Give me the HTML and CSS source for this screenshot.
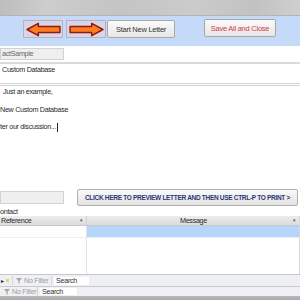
FILE: index.html
```html
<!DOCTYPE html>
<html lang="en">
<head>
  <meta charset="UTF-8" />
  <title>Letter</title>
  <link rel="stylesheet" href="styles.css">
</head>
<body>
  <!-- Window title bar -->
  <div class="titlebar"></div>

  <!-- Toolbar -->
  <div class="toolbar">
    <button class="arrow-btn">
      <svg width="35" height="15" viewBox="0 0 34 14"><polygon points="1,7 12,1 12,4 33,4 33,10 12,10 12,13" fill="#ff7d22" stroke="#8a1c12" stroke-width="1.4" stroke-linejoin="round"/></svg>
    </button>
    <button class="arrow-btn">
      <svg width="35" height="15" viewBox="0 0 34 14"><polygon points="33,7 22,1 22,4 1,4 1,10 22,10 22,13" fill="#ff7d22" stroke="#8a1c12" stroke-width="1.4" stroke-linejoin="round"/></svg>
    </button>
    <button class="btn start-btn">Start New Letter</button>
    <button class="btn save-btn">Save All and Close</button>
  </div>

  <!-- Letter -->
  <div class="letter">
    <div class="name-row">
      <div class="field">actSample</div>
    </div>
    <div class="db-row">Custom Database</div>
    <div class="body-text">
      <p class="indent">Just an example,</p>
      <p>New Custom Database</p>
      <p>ter our discussion...<span class="caret"></span></p>
    </div>
  </div>

  <div class="preview-row">
    <div class="field"></div>
    <button class="preview-btn">CLICK HERE TO PREVIEW LETTER AND THEN USE CTRL-P TO PRINT &gt;</button>
  </div>

  <div class="contact-label">ontact</div>

  <!-- Datasheet -->
  <div class="sheet">
    <div class="head">Reference<span class="drop">▾</span></div>
    <div class="head head-msg">Message<span class="drop">▾</span></div>
    <div class="cell"></div>
    <div class="cell selected"></div>
    <div class="cell filler"></div>
    <div class="cell filler"></div>
  </div>

  <!-- Record navigation -->
  <div class="nav nav-sub">
    <span class="new-rec">▸<span class="star"></span></span>
    <span class="filter">
      <svg width="6" height="6" viewBox="0 0 6 6"><polygon points="0,0 6,0 3.6,3 3.6,6 2.4,5 2.4,3" fill="#a8a8a8"/></svg>
      No Filter
    </span>
    <span class="search">Search</span>
  </div>
  <div class="nav nav-main">
    <span class="filter first">
      <svg width="6" height="6" viewBox="0 0 6 6"><polygon points="0,0 6,0 3.6,3 3.6,6 2.4,5 2.4,3" fill="#a8a8a8"/></svg>
      No Filter
    </span>
    <span class="search">Search</span>
  </div>
  <div class="bottom"></div>
</body>
</html>
```

FILE: styles.css
```css
* {
  margin: 0;
  padding: 0;
  box-sizing: border-box;
}

html, body {
  width: 300px;
  height: 300px;
  overflow: hidden;
  background: #fff;
  font-family: "Liberation Sans", Arial, sans-serif;
  font-size: 7.2px;
  letter-spacing: -0.3px;
  color: #2a2a2a;
}

.titlebar {
  height: 16px;
  background: linear-gradient(to right, #bdbdbd, #cdcdcd 15%, #c4c4c4 40%, #cbcbcb 65%, #c2c2c2 85%, #cfcfcf);
  border-bottom: 1px solid #b4b4b4;
}

.toolbar {
  height: 30px;
  background: #c4daf8;
  display: flex;
  align-items: flex-start;
  padding: 4px 0 0 23px;
}

.arrow-btn {
  width: 40px;
  height: 18px;
  margin-right: 3px;
  background: #d9d4e6;
  border: 1px solid #b4b2c4;
  display: flex;
  align-items: center;
  justify-content: center;
}

.btn {
  height: 18px;
  background: linear-gradient(#fbfbfb, #e6e6e6);
  border: 1px solid #a8a8a8;
  border-radius: 2px;
  font-family: "Liberation Sans", Arial, sans-serif;
  font-size: 7.5px;
  letter-spacing: -0.25px;
  color: #333;
}

.start-btn {
  width: 68px;
  margin-left: -2px;
}

.save-btn {
  width: 72px;
  margin-left: 29px;
  margin-top: -1px;
  color: #d0404a;
}

.letter {
  height: 141px;
}

.name-row {
  height: 16px;
  padding-top: 2px;
}

.field {
  width: 64px;
  height: 12px;
  background: #efefef;
  border: 1px solid #d2d2d2;
  color: #666;
  line-height: 10px;
  padding-left: 1px;
}

.db-row {
  height: 24px;
  border-top: 2px solid #dadada;
  border-bottom: 3px double #d2d2d2;
  line-height: 11px;
  padding-left: 2px;
}

.body-text {
  margin-top: -3px;
  line-height: 17.5px;
}

.indent {
  padding-left: 3px;
}

.caret {
  display: inline-block;
  width: 1px;
  height: 9px;
  background: #222;
  vertical-align: middle;
  margin-left: 1px;
}

.preview-row {
  height: 20px;
  display: flex;
  align-items: center;
}

.preview-row .field {
  height: 13px;
}

.preview-btn {
  width: 221px;
  height: 17px;
  margin-left: 13px;
  background: linear-gradient(#fafafa, #e2e2e2);
  border: 1px solid #b0b0b0;
  border-radius: 2px;
  font-family: "Liberation Sans", Arial, sans-serif;
  font-weight: bold;
  font-size: 6.5px;
  letter-spacing: -0.3px;
  color: #2c3878;
}

.contact-label {
  height: 9px;
  line-height: 9px;
}

.sheet {
  display: grid;
  grid-template-columns: 87px 1fr;
  grid-template-rows: 10px 12px 36px;
  border-right: 1px solid #d8d8d8;
}

.head {
  background: linear-gradient(#ececec, #dcdcdc);
  border-right: 1px solid #cfcfcf;
  border-bottom: 1px solid #c8c8c8;
  line-height: 9px;
  padding-left: 1px;
  position: relative;
}

.head-msg {
  text-align: center;
  border-right: none;
}

.drop {
  position: absolute;
  right: 3px;
  top: 0;
  font-size: 5px;
  color: #555;
}

.cell {
  border-right: 1px solid #e2e2e2;
  border-bottom: 1px solid #eeeeee;
}

.selected {
  background: #b5d5fb;
  border-right: none;
}

.filler {
  border-bottom: none;
}

.filler + .filler {
  border-right: none;
}

.nav {
  display: flex;
  align-items: center;
  color: #a0a0a0;
  background: #eef0f3;
}

.nav-sub {
  height: 13px;
  border-top: 1px solid #c4c6ca;
  border-bottom: 1px solid #c8cacc;
}

.nav-main {
  height: 9px;
}

.new-rec {
  display: flex;
  align-items: center;
  color: #222;
  font-size: 6px;
  width: 12px;
  padding-left: 1px;
}

.star {
  width: 3px;
  height: 3px;
  margin-left: 2px;
  background: #f0d068;
}

.filter {
  display: flex;
  align-items: center;
  gap: 2px;
  width: 40px;
  padding-left: 3px;
  border-left: 1px solid #d6d6d6;
  border-right: 1px solid #d6d6d6;
}

.filter.first {
  width: 38px;
  padding-left: 4px;
  border-left: none;
}

.search {
  background: #fff;
  color: #333;
  width: 35px;
  height: 8px;
  line-height: 8px;
  padding-left: 2px;
  margin-left: 2px;
}

.nav-main .search {
  width: 37px;
  height: 7px;
  line-height: 7px;
}

.bottom {
  height: 6px;
  background: linear-gradient(#b8b8b8, #a4a4a4);
}
```
